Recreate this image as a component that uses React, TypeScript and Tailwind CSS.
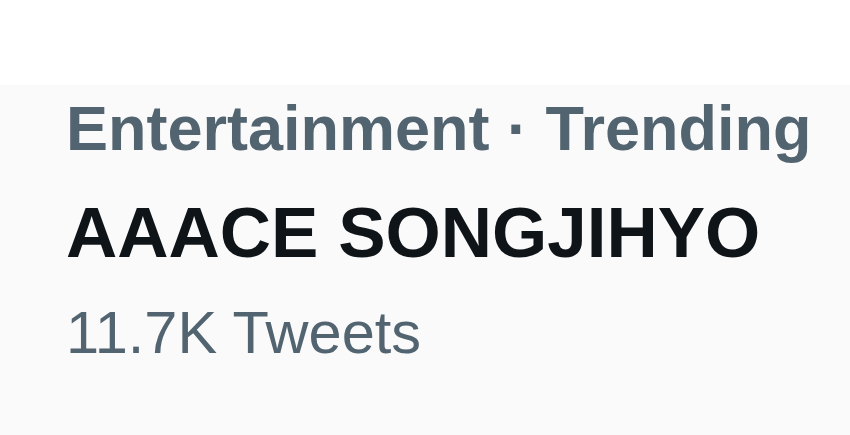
export default function App() {
  return (
    <div className="w-[850px] h-[435px] bg-white overflow-hidden" style={{ fontFamily: '"Liberation Sans", Arial, sans-serif' }}>
      <div className="h-[85px] bg-white" />
      <div className="h-[350px] bg-[#fafafa] pl-[66px] pt-[12px] flex flex-col">
        <div className="text-[63px] leading-none font-bold text-[#536471] whitespace-nowrap">
          Entertainment · Trending
        </div>
        <div className="mt-[37px] text-[71px] leading-none font-bold text-[#0f1419] whitespace-nowrap">
          AAACE SONGJIHYO
        </div>
        <div className="mt-[35px] text-[59.5px] leading-none text-[#536471] whitespace-nowrap">
          11.7K Tweets
        </div>
      </div>
    </div>
  );
}
